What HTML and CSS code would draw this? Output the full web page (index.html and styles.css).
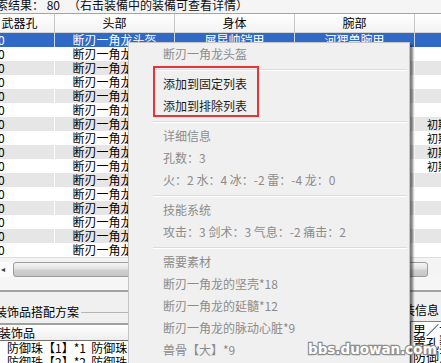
FILE: index.html
```html
<!DOCTYPE html>
<html lang="zh">
<head>
<meta charset="utf-8">
<title>装备搜索</title>
<link rel="stylesheet" href="styles.css">
</head>
<body>
<div class="app">
  <div class="topline">搜索结果：&nbsp;80&nbsp;&nbsp;&nbsp;（右击装備中的装備可查看详情）</div>
  <div class="table">
    <div class="row thead"><div>武器孔</div><div>头部</div><div>身体</div><div>腕部</div><div></div></div>
    <div class="row trow sel"><div class="c1">0</div><div>断刃一角龙头盔</div><div>犀昆帅铠甲</div><div>河狸兽腕甲</div><div class="c5"></div></div>
    <div class="row trow"><div class="c1">0</div><div>断刃一角龙头盔</div><div></div><div></div><div class="c5"></div></div>
    <div class="row trow alt"><div class="c1">0</div><div>断刃一角龙头盔</div><div></div><div></div><div class="c5"></div></div>
    <div class="row trow"><div class="c1">0</div><div>断刃一角龙头盔</div><div></div><div></div><div class="c5"></div></div>
    <div class="row trow alt"><div class="c1">0</div><div>断刃一角龙头盔</div><div></div><div></div><div class="c5"></div></div>
    <div class="row trow"><div class="c1">0</div><div>断刃一角龙头盔</div><div></div><div></div><div class="c5"></div></div>
    <div class="row trow alt"><div class="c1">0</div><div>断刃一角龙头盔</div><div></div><div></div><div class="c5">初期</div></div>
    <div class="row trow"><div class="c1">0</div><div>断刃一角龙头盔</div><div></div><div></div><div class="c5">初期</div></div>
    <div class="row trow alt"><div class="c1">0</div><div>断刃一角龙头盔</div><div></div><div></div><div class="c5">初期</div></div>
    <div class="row trow"><div class="c1">0</div><div>断刃一角龙头盔</div><div></div><div></div><div class="c5">初期</div></div>
    <div class="row trow alt"><div class="c1">0</div><div>断刃一角龙头盔</div><div></div><div></div><div class="c5"></div></div>
    <div class="row trow"><div class="c1">0</div><div>断刃一角龙头盔</div><div></div><div></div><div class="c5"></div></div>
    <div class="row trow alt"><div class="c1">0</div><div>断刃一角龙头盔</div><div></div><div></div><div class="c5"></div></div>
    <div class="row trow"><div class="c1">0</div><div>断刃一角龙头盔</div><div></div><div></div><div class="c5"></div></div>
    <div class="row trow alt"><div class="c1">0</div><div>断刃一角龙头盔</div><div></div><div></div><div class="c5"></div></div>
    <div class="row trow"><div class="c1">0</div><div>断刃一角龙头盔</div><div></div><div></div><div class="c5"></div></div>
  </div>
  <div class="hscroll"><span class="arrow">&#9666;</span><div class="thumb"></div></div>
  <div class="tfoot"></div>
  <div class="bottom">
    <div class="group gleft">
      <div class="legend"><span>装饰品搭配方案</span><i class="gline"></i></div>
      <div class="list">
        <div class="lhead">装饰品</div>
        <div class="lrow">防御珠【1】*1&nbsp;&nbsp;防御珠【1】*1</div>
        <div class="lrow">防御珠【2】*2&nbsp;&nbsp;防御珠【1】*1</div>
      </div>
    </div>
    <div class="group gright">
      <div class="legend"><span>套装信息</span><i class="gline"></i></div>
      <div class="gbox">
        <div>男／女</div>
        <div>置孔数</div>
        <div>防御力</div>
      </div>
    </div>
  </div>
</div>

<div class="menu">
  <div class="mi">断刃一角龙头盔</div>
  <div class="msep"></div>
  <div class="mi on">添加到固定列表</div>
  <div class="mi on">添加到排除列表</div>
  <div class="msep"></div>
  <div class="mi">详细信息</div>
  <div class="mi">孔数<span class="cl">：</span>3</div>
  <div class="mi">火<span class="cl">：</span>2 水<span class="cl">：</span>4 冰<span class="cl">：</span>-2 雷<span class="cl">：</span>-4 龙<span class="cl">：</span>0</div>
  <div class="msep"></div>
  <div class="mi">技能系统</div>
  <div class="mi">攻击<span class="cl">：</span>3 剑术<span class="cl">：</span>3 气息<span class="cl">：</span>-2 痛击<span class="cl">：</span>2</div>
  <div class="msep"></div>
  <div class="mi">需要素材</div>
  <div class="mi">断刃一角龙的坚壳*18</div>
  <div class="mi">断刃一角龙的延髓*12</div>
  <div class="mi">断刃一角龙的脉动心脏*9</div>
  <div class="mi">兽骨【大】*9</div>
  <div class="redbox"></div>
</div>

<div class="watermark">bbs.duowan.com</div>
</body>
</html>
```

FILE: styles.css
```css
* { box-sizing: border-box; }
html, body { margin: 0; padding: 0; }
body {
  width: 441px;
  height: 363px;
  overflow: hidden;
  position: relative;
  background: #f0f0f0;
  font-family: "Noto Sans CJK SC", "Noto Sans", sans-serif;
  font-size: 12px;
  color: #000;
}

.app { width: 441px; }

.topline {
  height: 13px;
  line-height: 9px;
  background: #f5f5f5;
  white-space: nowrap;
  margin-left: -16px;
  color: #111;
}

.table { margin-left: -15px; width: 700px; }
.row {
  display: grid;
  grid-template-columns: 70px 120px 120px 120px 270px;
}
.thead {
  height: 20px;
  line-height: 18px;
  border-top: 1px solid #a5a5a5;
  border-bottom: 1px solid #d5d5d5;
  background: linear-gradient(#ffffff, #f3f3f3);
}
.thead > div {
  border-right: 1px solid #c6c6c6;
  text-align: center;
  white-space: nowrap;
}
.trow {
  height: 14px;
  line-height: 14px;
  background: #ffffff;
}
.trow > div {
  border-right: 1px solid #ffffff;
  text-align: center;
  white-space: nowrap;
  overflow: hidden;
}
.trow > .c1 { text-align: left; padding-left: 13px; }
.trow > .c5 { text-align: left; padding-left: 12px; font-size: 11px; }
.trow.alt { background: #e6e6e6; }
.trow.sel { background: #3169c6; color: #fff; }
.trow.sel > div { border-right-color: #c9d6ee; }

.hscroll {
  height: 20px;
  display: flex;
  align-items: flex-end;
  background: #f4f4f4;
  border-top: 1px solid #dedede;
}
.arrow {
  width: 13px;
  height: 15px;
  line-height: 15px;
  font-size: 8px;
  color: #3a3a3a;
  padding-left: 1px;
  background: #fbfbfb;
  font-family: "DejaVu Sans", sans-serif;
}
.thumb {
  width: 415px;
  height: 15px;
  border: 1px solid #9c9c9c;
  border-radius: 3px;
  background: linear-gradient(#f7f7f7, #e3e3e3 45%, #d0d0d0 55%, #c6c6c6);
}
.tfoot {
  height: 15px;
  background: #f6f6f6;
  border-bottom: 2px solid #a3a3a3;
}

.bottom { display: flex; }
.gleft { width: 393px; margin-left: -8px; flex: none; }
.gright { flex: 1; min-width: 0; }
.legend {
  display: flex;
  align-items: center;
  height: 16px;
  margin-top: 12px;
  line-height: 16px;
  white-space: nowrap;
}
.gleft .legend span { padding-left: 3px; }
.gright .legend { margin-top: 10px; margin-bottom: 2px; }
.gright .legend span { padding-left: 6px; }
.gline {
  flex: 1;
  height: 1px;
  background: #b5b5b5;
  margin-left: 2px;
}
.list {
  margin-top: 3px;
  border-top: 2px solid #a0a0a0;
  background: #fff;
}
.lhead {
  height: 16px;
  line-height: 16px;
  padding-left: 7px;
  background: linear-gradient(#ffffff, #eeeeee);
  border-bottom: 1px solid #707070;
}
.lrow {
  height: 14px;
  line-height: 14px;
  padding-left: 15px;
  white-space: nowrap;
}
.gbox {
  margin-left: 25px;
  margin-top: 3px;
  border-top: 1px solid #808080;
  border-left: 1px solid #808080;
  background: #fff;
  padding: 1px 0 0 2px;
  font-size: 13px;
  line-height: 13px;
  white-space: nowrap;
  height: 60px;
}

.menu {
  position: absolute;
  left: 128px;
  top: 42px;
  width: 282px;
  height: 340px;
  background: #f0f0f0;
  border: 1px solid #c4c4c4;
  box-shadow: 3px 3px 2px rgba(0, 0, 0, 0.5);
}
.mi {
  height: 22px;
  line-height: 22px;
  padding-left: 34px;
  color: #8c8c8c;
  white-space: nowrap;
}
.mi.on { color: #1c1c1c; }
.cl { font-family: "Noto Sans CJK TC", "Noto Sans CJK SC", sans-serif; }
.msep {
  height: 8px;
  margin: 0 2px 0 24px;
  background: linear-gradient(to bottom, transparent 4px, #dcdcdc 4px, #dcdcdc 5px, #ffffff 5px, #ffffff 6px, transparent 6px);
}
.redbox {
  position: absolute;
  left: 24px;
  top: 23px;
  width: 106px;
  height: 51px;
  border: 2px solid #e3363b;
}

.watermark {
  position: absolute;
  left: 308px;
  top: 342px;
  font-family: "DejaVu Sans", sans-serif;
  font-weight: bold;
  font-size: 13.5px;
  line-height: 15px;
  color: #ffffff;
  -webkit-text-stroke: 2.5px #8f8f8f;
  paint-order: stroke fill;
  white-space: nowrap;
}
```
